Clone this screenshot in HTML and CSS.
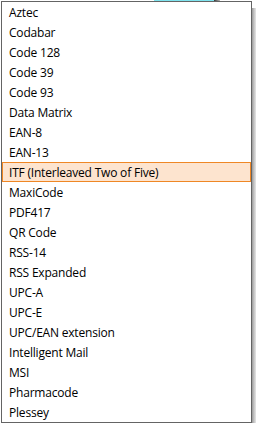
FILE: index.html
```html
<!DOCTYPE html>
<html lang="en">
<head>
    <meta charset="UTF-8">
    <meta name="viewport" content="width=device-width, initial-scale=1.0">
    <title>Barcode Types</title>
    <link rel="stylesheet" href="styles.css">
</head>
<body>
    <div class="behind">
        <div class="behind-field"></div>
        <div class="behind-edge"></div>
    </div>
    <div class="dropdown-wrap">
        <ul class="dropdown">
            <li>Aztec</li>
            <li>Codabar</li>
            <li>Code 128</li>
            <li>Code 39</li>
            <li>Code 93</li>
            <li>Data Matrix</li>
            <li>EAN-8</li>
            <li>EAN-13</li>
            <li class="hover">ITF (Interleaved Two of Five)</li>
            <li>MaxiCode</li>
            <li>PDF417</li>
            <li>QR Code</li>
            <li>RSS-14</li>
            <li>RSS Expanded</li>
            <li>UPC-A</li>
            <li>UPC-E</li>
            <li>UPC/EAN extension</li>
            <li>Intelligent Mail</li>
            <li>MSI</li>
            <li>Pharmacode</li>
            <li>Plessey</li>
        </ul>
        <div class="shadow"></div>
    </div>
</body>
</html>
```

FILE: styles.css
```css
body {
    margin: 0;
    background-color: #fff;
    font-family: "Open Sans", "Noto Sans", sans-serif;
    font-size: 12px;
    letter-spacing: -0.2px;
    color: #000;
}
.behind {
    display: flex;
    height: 1px;
}
.behind-field {
    margin-left: 154px;
    width: 60px;
    background-color: #7fe3ee;
}
.behind-edge {
    width: 6px;
    background: linear-gradient(to right, #333, #bbb);
}
.dropdown-wrap {
    display: flex;
    margin-left: 1px;
}
.dropdown {
    list-style: none;
    margin: 0;
    padding: 0;
    width: 249px;
    border: 1px solid #646464;
    background-color: #fff;
}
.dropdown li {
    box-sizing: border-box;
    height: 20px;
    line-height: 19px;
    padding-left: 6px;
    border: 1px solid transparent;
    white-space: nowrap;
}
.dropdown li.hover {
    background-color: #fde4cf;
    border-color: #ef8725;
}
.shadow {
    width: 4px;
    margin-top: 7px;
    background: linear-gradient(to right, #9a9a9a, #c4c4c4 50%, #e6e6e6);
}
```
